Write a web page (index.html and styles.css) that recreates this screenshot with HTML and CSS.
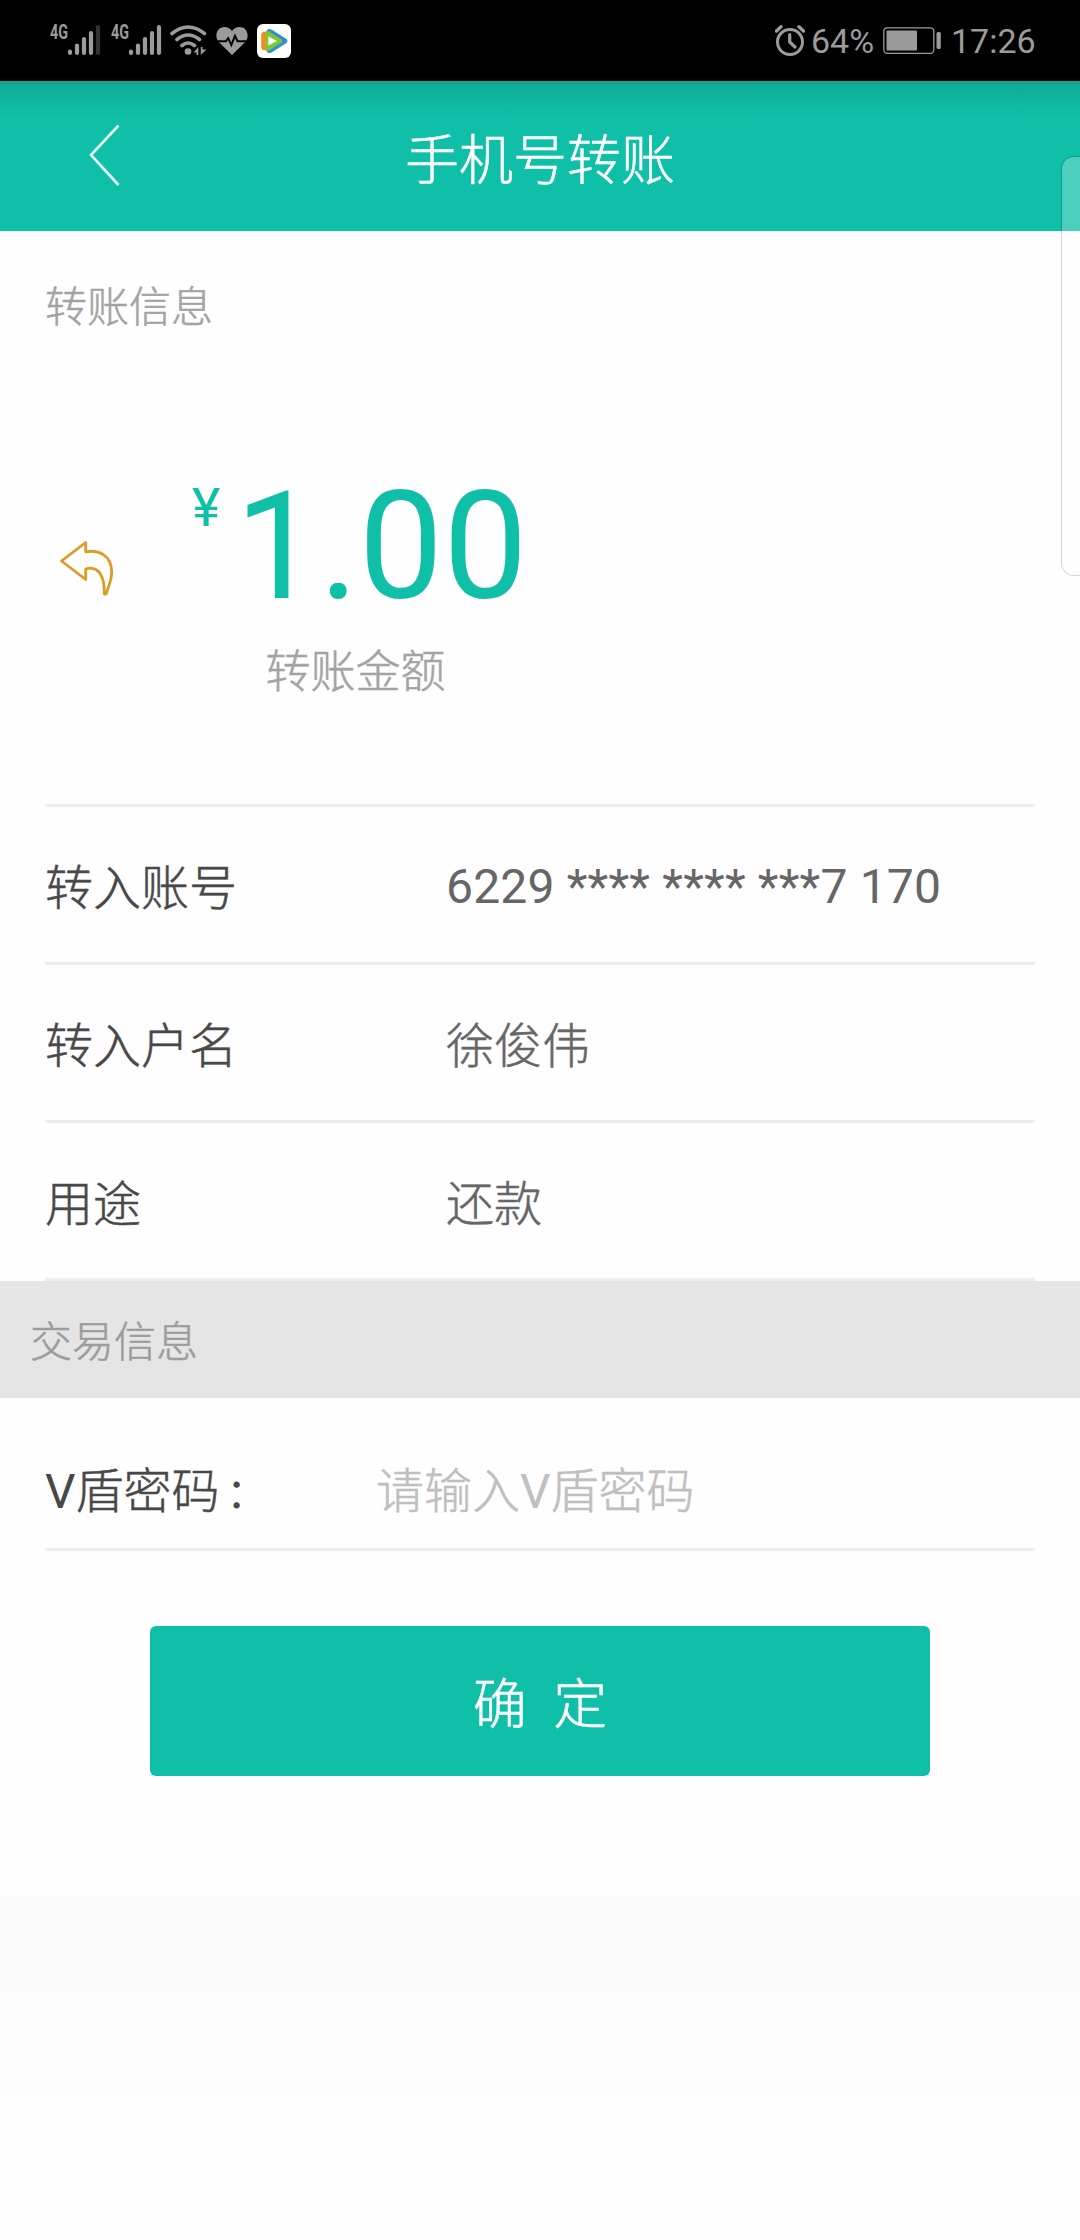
FILE: index.html
```html
<!DOCTYPE html>
<html lang="zh-CN">
<head>
<meta charset="utf-8">
<title>手机号转账</title>
<link rel="stylesheet" href="styles.css">
</head>
<body>
<div class="statusbar">
  <div class="status-left">
    <svg class="signal" width="58" height="48" viewBox="-4 -14 58 48">
      <text class="net" x="0" y="15" textLength="18" lengthAdjust="spacingAndGlyphs">4G</text>
      <path class="bar" d="M20 27.5V29M27 21.5V29M34 15V29M41 9V29"/>
      <path class="bar bar-off" d="M48 3.200V29"/>
    </svg>
    <svg class="signal" width="58" height="48" viewBox="-4 -14 58 48">
      <text class="net" x="0" y="15" textLength="18" lengthAdjust="spacingAndGlyphs">4G</text>
      <path class="bar" d="M20 27.5V29M27 21.500V29M34 15V29M41 9V29M48 3.200V29"/>
    </svg>
    <svg class="wifi" width="37" height="34" viewBox="0 0 37 34">
      <path class="arc" d="M2 9.500Q18 -3.500 34.500 9.500M7 15.500Q18 6.500 29.500 15.500M12 21.500Q18 16.500 24.500 21.500"/>
      <circle class="solid" cx="18" cy="27.500" r="3.300"/>
      <path class="solid" d="M28.300 23V31H26.500V28.500H23.700ZM30.800 31V23H32.600V25.500H36.500Z"/>
    </svg>
    <svg class="heart" width="32" height="34" viewBox="0 0 32 34">
      <path class="solid" d="M16 31L2.300 17.500C-1.500 12.500 .3 3 8.500 3C12 3 14.600 4.700 16 7.300C17.400 4.700 20 3 23.500 3C31.700 3 33.500 12.500 29.700 17.500Z"/>
      <path class="pulse" d="M1 17.200H10L12.200 14.200L15.300 21L19 11.800L21.500 17.200H31"/>
    </svg>
    <svg class="player" width="34" height="34" viewBox="0 0 34 34">
      <rect width="34" height="34" rx="6" fill="#fff"/>
      <path d="M9.500 7Q10.500 4 14.500 5.500L29.500 15Q31.500 17 29.500 19L14.500 28.500Q10.500 30 9.500 27Z" fill="#2f8fd6"/>
      <path d="M4.200 10.500Q4.500 8 7 7.800L12 7.500V26.500L7 26.200Q4.500 26 4.200 23.500Z" fill="#f28c1e"/>
      <path d="M8.500 9Q9.200 6.500 12 7.500L24.500 15.500Q26 17 24.500 18.500L12 26.500Q9.200 27.500 8.500 25Z" fill="#7cc832"/>
      <path d="M11.300 12.500L20 17L11.300 21.500Z" fill="#fff"/>
    </svg>
  </div>
  <div class="status-right">
    <svg width="30" height="34" viewBox="0 0 30 34">
      <circle class="ring" cx="15" cy="18" r="12.500"/>
      <path class="hand" d="M14.700 10.500V18L20 23"/>
      <path class="bell" d="M1.500 7L6 2.700M28.500 7L24 2.700"/>
    </svg>
    <span class="percent">64%</span>
    <svg class="battery" width="59" height="34" viewBox="0 0 59 34">
      <rect x=".8" y="3.800" width="50" height="25.500" rx="3.500" fill="none" stroke="#9b9b9b" stroke-width="1.300"/>
      <rect x="3.500" y="6.500" width="30.500" height="20" rx="1" fill="#9b9b9b"/>
      <rect x="53.500" y="8" width="4.300" height="17" rx="1.500" fill="#9b9b9b"/>
    </svg>
    <span class="clock">17:26</span>
  </div>
</div>

<header class="navbar">
  <svg class="back" width="32" height="64" viewBox="0 0 32 64"><path d="M29.500 1.500L2 31L29.500 61"/></svg>
  <h1 class="title">手机号转账</h1>
</header>

<main>
  <h2 class="section-title">转账信息</h2>
  <section class="amount-block">
    <svg class="reply" width="54" height="56" viewBox="0 0 54 56">
      <path d="M1.500 21L25.700 2.500V11.800C38 9.500 51.700 15 51.700 32C51.700 41 48 47 46.200 54H44.300C44.500 40 41.500 28.500 30 28.200Q26.500 28.200 25.700 29.500V39.500Z"/>
    </svg>
    <div class="amount-body">
      <div class="amount"><span class="currency">¥</span><span class="number">1.00</span></div>
      <div class="caption">转账金额</div>
    </div>
  </section>
  <dl class="details">
    <div class="row"><dt>转入账号</dt><dd class="account">6229 **** **** ***7 170</dd></div>
    <div class="row"><dt>转入户名</dt><dd>徐俊伟</dd></div>
    <div class="row"><dt>用途</dt><dd>还款</dd></div>
  </dl>
  <h2 class="section-band">交易信息</h2>
  <div class="password-row">
    <label class="password-label"><span class="latin">V</span>盾密码<span class="latin colon"> :</span></label>
    <span class="placeholder">请输入<span class="latin">V</span>盾密码</span>
  </div>
  <div class="submit">确&nbsp; 定</div>
</main>
<footer class="fade"></footer>
<div class="edge-panel"></div>
</body>
</html>
```
FILE: styles.css
```css
* { box-sizing: border-box; margin: 0; padding: 0; }

body {
  position: relative;
  display: flex;
  flex-direction: column;
  width: 1080px;
  height: 2240px;
  overflow: hidden;
  background: #fefefe;
  font-family: Roboto, "Noto Sans CJK SC", sans-serif;
  font-weight: 400;
}

svg { display: block; flex: none; }

/* Chinese text: light face, slightly thickened */
.title, .section-title, .caption, .row dt, .row dd, .section-band, .password-row, .submit {
  font-weight: 300;
  -webkit-text-stroke: .5px currentColor;
}
.password-row .latin, .row .account {
  font-weight: 400;
  -webkit-text-stroke: 0;
}

/* status bar */
.statusbar {
  height: 81px;
  padding: 24px 45px 0 50px;
  display: flex;
  justify-content: space-between;
  background: #000;
  color: #9b9b9b;
}
.status-left, .status-right { display: flex; height: 34px; }
.signal { margin: -14px 7px 0 -4px; }
.wifi { margin: 0 9px 0 -2px; }
.heart { margin-right: 9px; }
.net { font: 700 20px Roboto, sans-serif; fill: #9b9b9b; }
.bar { fill: none; stroke: #9b9b9b; stroke-width: 4.2; stroke-linecap: round; }
.bar-off { stroke: #333; }
.arc { fill: none; stroke: #9b9b9b; stroke-width: 3.6; stroke-linecap: round; }
.solid { fill: #9b9b9b; }
.pulse { fill: none; stroke: #000; stroke-width: 2; }
.ring { fill: none; stroke: #9b9b9b; stroke-width: 3; }
.hand { fill: none; stroke: #9b9b9b; stroke-width: 3.2; stroke-linecap: round; stroke-linejoin: round; }
.bell { fill: none; stroke: #9b9b9b; stroke-width: 3.4; stroke-linecap: round; }
.percent, .clock { font-size: 34px; line-height: 34px; }
.percent { width: 71px; margin-left: 6px; }
.battery { margin-left: 1px; }
.clock { width: 84px; margin-left: 9px; }

/* navigation bar */
.navbar {
  height: 150px;
  padding: 43px 0 0 89px;
  display: flex;
  background: linear-gradient(#0fa38f 0, #0fae99 8px, #0fb9a2 22px, #0fbfa7 40px);
}
.back path { fill: none; stroke: #e8fffb; stroke-width: 2.6; }
.title {
  width: 838px;
  text-align: center;
  font-size: 54px;
  line-height: 76px;
  color: #fff;
}

/* transfer summary */
.section-title {
  height: 253px;
  padding: 47px 45px 0;
  font-size: 42px;
  line-height: 60px;
  color: #a3a3a3;
}
.amount-block { height: 320px; padding-left: 60px; display: flex; }
.reply { margin-top: 56px; }
.reply path { fill: none; stroke: #e09a26; stroke-width: 2.8; stroke-linejoin: round; }
.amount-body { width: 327px; margin-left: 78px; }
.amount { display: flex; height: 140px; color: #0fbfa7; }
.currency { flex: none; width: 43px; font-size: 54px; line-height: 47px; }
.number { font-size: 150px; line-height: 126px; white-space: nowrap; }
.caption {
  height: 60px;
  margin-top: 19px;
  text-align: center;
  font-size: 45px;
  line-height: 60px;
  color: #a3a3a3;
}

/* detail rows */
.details { margin: 0 45px; border-top: 3px solid #ededed; }
.row {
  height: 158px;
  padding-bottom: 1px;
  display: flex;
  align-items: center;
  border-bottom: 3px solid #ededed;
  font-size: 48px;
}
.row dt { width: 401px; color: #484848; }
.row dd { color: #666; }
.row .account { padding-top: 4px; letter-spacing: .19px; }

.section-band {
  height: 117px;
  padding: 3px 0 0 30px;
  font-size: 42px;
  line-height: 117px;
  background: #e5e5e5;
  color: #9c9c9c;
}

/* password entry */
.password-row {
  height: 153px;
  margin: 0 45px;
  padding-top: 27px;
  display: flex;
  align-items: center;
  border-bottom: 3px solid #ededed;
  font-size: 48px;
}
.password-label { width: 331px; color: #484848; }
.password-row .colon { letter-spacing: -.7px; -webkit-text-stroke: .8px currentColor; }
.placeholder { color: #bfbfbf; }

.submit {
  width: 780px;
  height: 150px;
  margin: 75px auto 120px;
  border-radius: 6px;
  background: #0fbfa7;
  color: #fff;
  text-align: center;
  font-size: 54px;
  line-height: 160px;
}

.fade {
  flex: 1;
  background: linear-gradient(#fbfbfb 98px, #fcfcfc 98px 196px, #fdfdfd 196px 294px, #fefefe 294px);
}

/* translucent drawer handle over the right edge */
.edge-panel {
  position: absolute;
  top: 153px;
  right: -14px;
  width: 33px;
  top: 156px;
  height: 420px;
  border: 1px solid rgba(0, 0, 0, .16);
  border-radius: 13px;
  background: rgba(255, 255, 255, .26);
  background-clip: padding-box;
}
```
